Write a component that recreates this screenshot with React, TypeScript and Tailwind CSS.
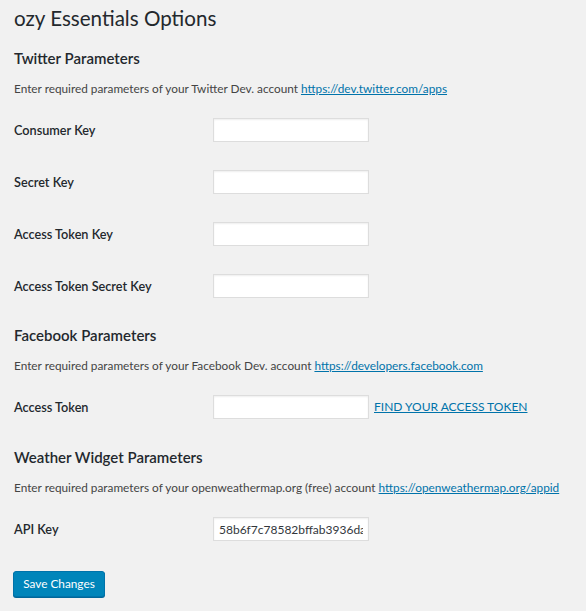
import React from 'react';

const font = { fontFamily: 'Lato, "Noto Sans", sans-serif' };

type Field = { label: string; value?: string; extra?: React.ReactNode };

const Row: React.FC<Field> = ({ label, value, extra }) => (
  <div className="flex h-[52px] items-center">
    <div className="w-[199px] pt-px text-[12.7px] font-semibold text-[#23282d]">{label}</div>
    <input
      type="text"
      defaultValue={value}
      className="h-[24px] w-[156px] border border-[#ddd] bg-white px-[5px] text-[12px] text-[#32373c] shadow-[inset_0_1px_2px_rgba(0,0,0,0.07)] outline-none"
    />
    {extra}
  </div>
);

const Section: React.FC<{
  title: string;
  intro: string;
  href: string;
  fields: Field[];
  className?: string;
}> = ({ title, intro, href, fields, className }) => (
  <div className={className}>
    <h2 className="text-[15px] font-semibold leading-[24px] text-[#23282d]">{title}</h2>
    <p className="mt-[10px] text-[11.8px] leading-[18px] text-[#444]">
      {intro}{' '}
      <a href="#" className="text-[#0073aa] underline">
        {href}
      </a>
    </p>
    <div className="mt-[6px]">
      {fields.map((f) => (
        <Row key={f.label} {...f} />
      ))}
    </div>
  </div>
);

export default function App() {
  return (
    <div className="min-h-[611px] w-full bg-[#f1f1f1] px-[14px]" style={font}>
      <h1 className="h-[36px] text-[20.6px] font-normal leading-[36px] text-[#23282d]">
        ozy Essentials Options
      </h1>

      <Section
        className="mt-[10px]"
        title="Twitter Parameters"
        intro="Enter required parameters of your Twitter Dev. account"
        href="https://dev.twitter.com/apps"
        fields={[
          { label: 'Consumer Key' },
          { label: 'Secret Key' },
          { label: 'Access Token Key' },
          { label: 'Access Token Secret Key' },
        ]}
      />

      <Section
        className="mt-[11px]"
        title="Facebook Parameters"
        intro="Enter required parameters of your Facebook Dev. account"
        href="https://developers.facebook.com"
        fields={[
          {
            label: 'Access Token',
            extra: (
              <a href="#" className="ml-[5px] text-[12px] text-[#0073aa] underline">
                FIND YOUR ACCESS TOKEN
              </a>
            ),
          },
        ]}
      />

      <Section
        className="mt-[12px]"
        title="Weather Widget Parameters"
        intro="Enter required parameters of your openweathermap.org (free) account"
        href="https://openweathermap.org/appid"
        fields={[{ label: 'API Key', value: '58b6f7c78582bffab3936da' }]}
      />

      <button
        type="button"
        className="-ml-px mt-[16px] block h-[26px] w-[92px] rounded-[3px] border border-[#0073aa] bg-[#0085ba] text-[11.8px] leading-[24px] text-white shadow-[0_1px_0_#006799]"
      >
        Save Changes
      </button>
    </div>
  );
}
